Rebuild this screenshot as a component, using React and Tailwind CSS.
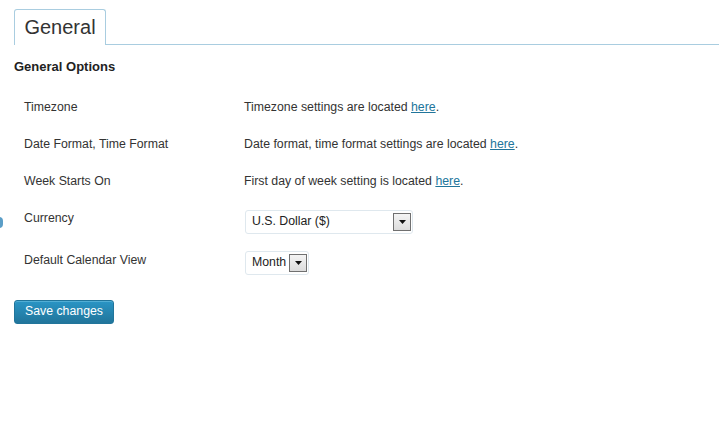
const ROWS = [
  { label: 'Timezone', text: 'Timezone settings are located ' },
  { label: 'Date Format, Time Format', text: 'Date format, time format settings are located ' },
  { label: 'Week Starts On', text: 'First day of week setting is located ' },
]

function Select({ value, width }) {
  return (
    <div className={`flex items-center justify-between h-[24px] border border-[#dfe8ee] rounded-[3px] bg-white pl-[6px] pr-[1px] ${width}`}>
      <span className="text-[12.3px] text-[#222]">{value}</span>
      <span className="w-[18px] h-[18px] border border-[#707070] bg-gradient-to-b from-[#f4f4f4] to-[#dcdcdc] flex items-center justify-center">
        <svg width="7" height="4" viewBox="0 0 7 4"><path d="M0 0h7L3.5 4z" fill="#111" /></svg>
      </span>
    </div>
  )
}

export default function App() {
  return (
    <div className="relative w-[719px] h-[423px] bg-white text-[#333] font-['Liberation_Sans',Arial,sans-serif] text-[12.3px]">
      {/* tab bar */}
      <div className="flex items-end pt-[9px]">
        <div className="w-[14px]" />
        <div className="h-[36px] w-[92px] border border-b-0 border-[#a9cde0] rounded-t-[3px] flex items-center justify-center text-[20px] text-[#333] pb-[2px]">
          General
        </div>
        <div className="flex-1 border-b border-[#a9cde0]" />
      </div>

      <div className="px-[14px]">
        <h3 className="font-bold text-[13px] text-[#222] mt-[12px]">General Options</h3>

        <div className="mt-[12px] flex flex-col">
          {ROWS.map(r => (
            <div key={r.label} className="flex items-center h-[37px]">
              <div className="w-[230px] pl-[10px]">{r.label}</div>
              <div>
                {r.text}
                <a href="#" className="text-[#21759b] underline">here</a>.
              </div>
            </div>
          ))}
          <div className="flex items-start pt-[10px]">
            <div className="w-[230px] pl-[10px] leading-[16px]">Currency</div>
            <div className="pl-[1px]"><Select value="U.S. Dollar ($)" width="w-[168px]" /></div>
          </div>
          <div className="flex items-start mt-[17px]">
            <div className="w-[230px] pl-[10px] leading-[16px] mt-[1px]">Default Calendar View</div>
            <div className="pl-[1px]"><Select value="Month" width="w-[64px]" /></div>
          </div>
        </div>

        <button className="mt-[25px] h-[24px] w-[100px] rounded-[3px] border border-[#21759b] bg-gradient-to-b from-[#2a95c5] to-[#21759b] text-white text-[12.3px] shadow-[inset_0_1px_0_rgba(120,200,230,0.5)]">
          Save changes
        </button>
      </div>

      {/* side handle */}
      <div className="absolute left-[-5px] top-[217px] w-[8px] h-[11px] rounded-full bg-[#5b9ec7]" />
    </div>
  )
}
